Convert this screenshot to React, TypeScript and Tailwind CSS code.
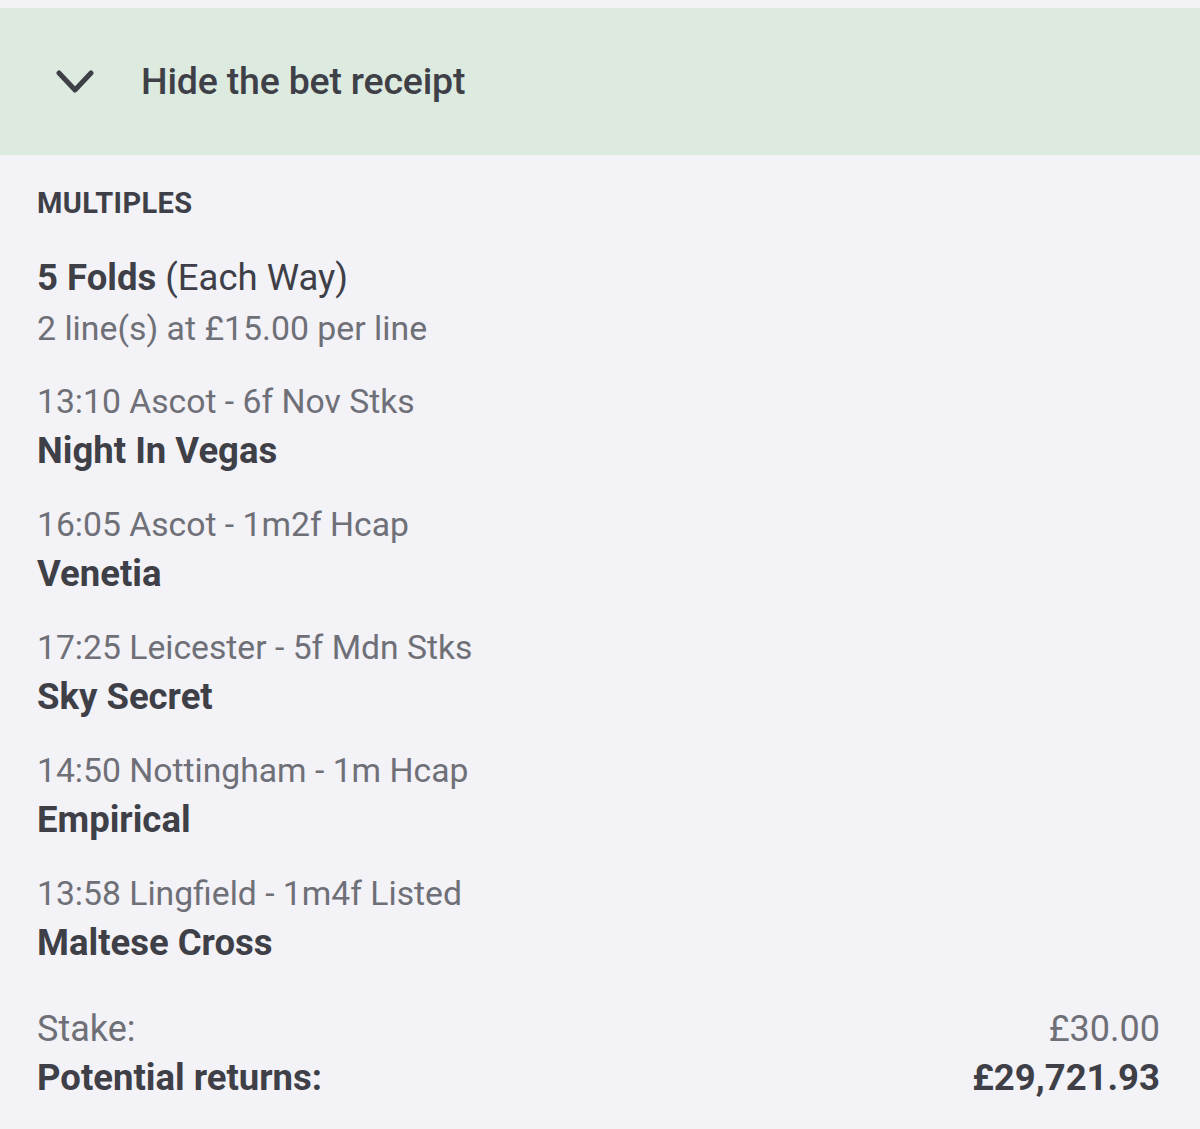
import React from "react";

const legs = [
  { race: "13:10 Ascot - 6f Nov Stks", horse: "Night In Vegas" },
  { race: "16:05 Ascot - 1m2f Hcap", horse: "Venetia" },
  { race: "17:25 Leicester - 5f Mdn Stks", horse: "Sky Secret" },
  { race: "14:50 Nottingham - 1m Hcap", horse: "Empirical" },
  { race: "13:58 Lingfield - 1m4f Listed", horse: "Maltese Cross" },
];

export default function App() {
  return (
    <div
      className="w-[1200px] h-[1129px] bg-[#f2f2f7] text-[#3e3f47] overflow-hidden"
      style={{ fontFamily: "Roboto, 'Noto Sans', sans-serif" }}
    >
      <div className="h-[8px] bg-[#f3f3f7]" />
      {/* header */}
      <div className="h-[147px] bg-[#dceae0] flex items-center pl-[56px]">
        <svg width="38" height="26" viewBox="0 0 38 26" fill="none" className="mt-[1px]">
          <path d="M3 4 L19 21 L35 4" stroke="#3e3f47" strokeWidth="5" strokeLinecap="round" strokeLinejoin="round" />
        </svg>
        <span className="ml-[47px] text-[37.5px] font-medium tracking-[-0.2px]">Hide the bet receipt</span>
      </div>

      <div className="pl-[37px] pr-[40px]">
        <div className="mt-[30px] text-[29px] font-bold leading-[36px] tracking-[0.4px]">MULTIPLES</div>

        <div className="mt-[32px] text-[36.5px] leading-[50px]">
          <span className="font-bold">5 Folds</span> (Each Way)
        </div>
        <div className="text-[33.8px] leading-[52px] text-[#6f7077]">2 line(s) at £15.00 per line</div>

        <div className="mt-[22px] flex flex-col gap-[25px]">
          {legs.map((l) => (
            <div key={l.horse}>
              <div className="text-[33.7px] leading-[49px] text-[#6f7077]">{l.race}</div>
              <div className="text-[36.5px] leading-[49px] font-bold">{l.horse}</div>
            </div>
          ))}
        </div>

        <div className="mt-[37px] flex justify-between text-[36px] leading-[50px] text-[#6f7077]">
          <span>Stake:</span>
          <span>£30.00</span>
        </div>
        <div className="flex justify-between text-[36.5px] leading-[48px] font-bold">
          <span>Potential returns:</span>
          <span>£29,721.93</span>
        </div>
      </div>
    </div>
  );
}
